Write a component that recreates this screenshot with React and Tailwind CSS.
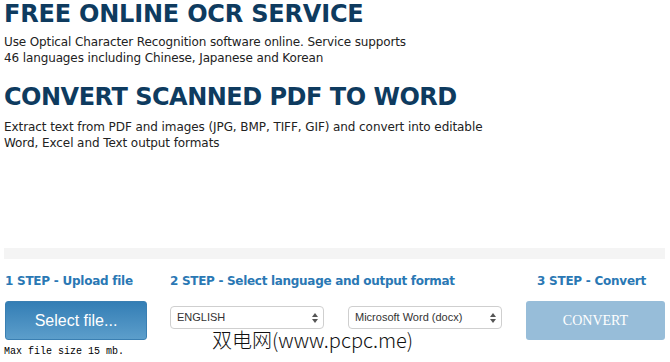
import React from "react";

const App = () => {
  return (
    <div className="relative w-[670px] h-[362px] bg-white overflow-hidden font-['DejaVu_Sans',sans-serif]">
      <div className="px-1">
        <h1 className="text-[24px] leading-[28px] font-bold text-[#0e3b5f] tracking-[-0.2px]">FREE ONLINE OCR SERVICE</h1>
        <p className="mt-[6px] text-[12px] leading-[16px] text-[#222] tracking-[-0.12px]">
          Use Optical Character Recognition software online. Service supports<br />
          46 languages including Chinese, Japanese and Korean
        </p>

        <h2 className="mt-[17px] text-[24px] leading-[28px] font-bold text-[#0e3b5f] tracking-[-0.5px]">CONVERT SCANNED PDF TO WORD</h2>
        <p className="mt-[8px] text-[12px] leading-[16px] text-[#222] tracking-[-0.08px]">
          Extract text from PDF and images (JPG, BMP, TIFF, GIF) and convert into editable<br />
          Word, Excel and Text output formats
        </p>

        {/* divider */}
        <div className="mt-[97px] h-[11px] w-[661px] bg-[#f4f4f4]" />

        {/* steps */}
        <div className="mt-[14px] flex">
          <div className="w-[142px] ml-[1px]">
            <p className="text-[12px] leading-[16px] font-bold text-[#2a78b4] tracking-[-0.25px]">1 STEP - Upload file</p>
            <button className="mt-[12px] w-[142px] h-[39px] rounded-[3px] border border-[#3a7fb2] bg-gradient-to-b from-[#337eb5] to-[#5c9ecb] text-white text-[16px] font-['Liberation_Sans',sans-serif]">
              Select file...
            </button>
            <p className="mt-[6px] -ml-[1px] text-[10px] leading-[12px] text-black font-['Liberation_Mono',monospace] whitespace-nowrap">Max file size 15 mb.</p>
          </div>

          <div className="ml-[23px] w-[332px]">
            <p className="text-[12px] leading-[16px] font-bold text-[#2a78b4] whitespace-nowrap tracking-[-0.3px]">2 STEP - Select language and output format</p>
            <div className="mt-[17px] flex gap-[24px]">
              <Select label="ENGLISH" />
              <Select label="Microsoft Word (docx)" />
            </div>
          </div>

          <div className="ml-[24px] w-[139px]">
            <p className="text-[12px] leading-[16px] font-bold text-[#2a78b4] text-center pr-[8px] tracking-[-0.25px]">3 STEP - Convert</p>
            <button className="mt-[12px] w-[139px] h-[39px] rounded-[3px] bg-[#97bdd9] text-white text-[14px] font-['Liberation_Serif',serif]">
              CONVERT
            </button>
          </div>
        </div>
      </div>

      {/* watermark */}
      <div className="absolute left-[212px] top-[328px] text-[20px] leading-[24px] text-[#111] font-light font-['Noto_Sans_CJK_SC','DejaVu_Sans',sans-serif] [text-shadow:0_0_2px_#fff,0_0_2px_#fff]">
        双电网(www.pcpc.me)
      </div>
    </div>
  );
};

const Select = ({ label }) => (
  <div className="w-[154px] h-[23px] rounded-[4px] border border-[#cfcfcf] bg-white flex items-center justify-between pl-[6px] pr-[5px]">
    <span className="text-[11px] text-[#333] font-['Liberation_Sans',sans-serif]">{label}</span>
    <svg width="6" height="10" viewBox="0 0 6 10">
      <path d="M0 4 L3 0 L6 4 Z M0 6 L3 10 L6 6 Z" fill="#555" />
    </svg>
  </div>
);

export default App;
